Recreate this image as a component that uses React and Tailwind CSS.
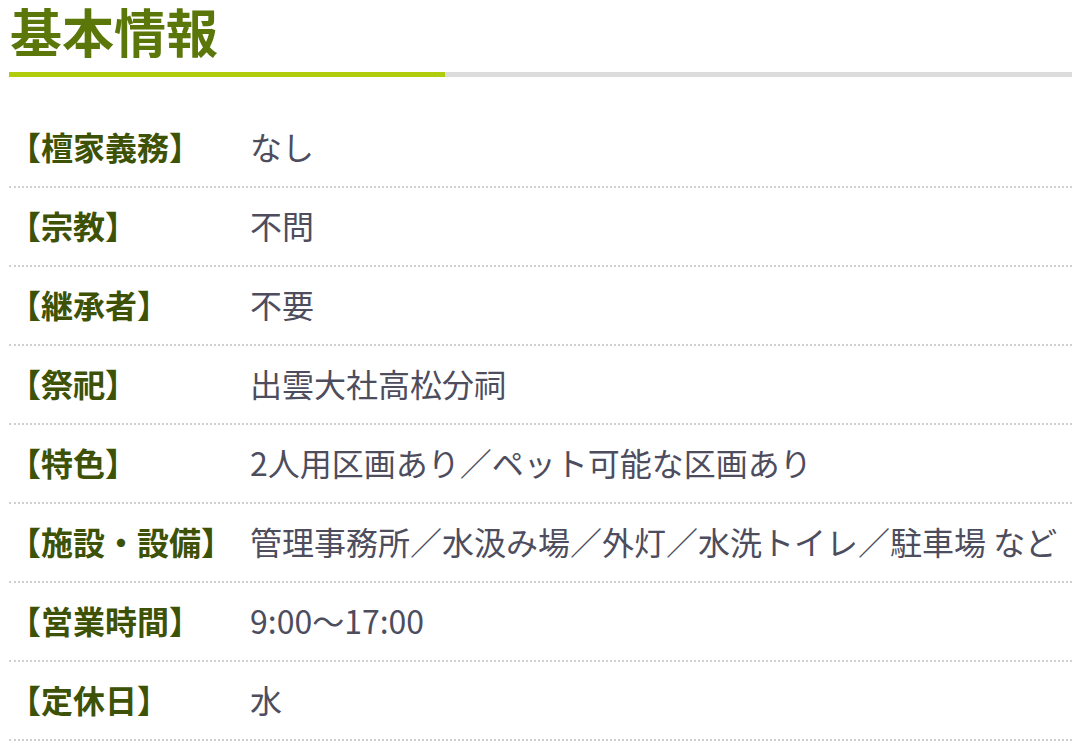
import React from 'react';

const rows = [
  ['【檀家義務】', 'なし'],
  ['【宗教】', '不問'],
  ['【継承者】', '不要'],
  ['【祭祀】', '出雲大社高松分祠'],
  ['【特色】', '2人用区画あり／ペット可能な区画あり'],
  ['【施設・設備】', '管理事務所／水汲み場／外灯／水洗トイレ／駐車場 など'],
  ['【営業時間】', '9:00〜17:00'],
  ['【定休日】', '水'],
];

export default function App() {
  return (
    <div className="bg-white min-h-[754px] pl-[9px]" style={{ fontFamily: '"Noto Sans CJK JP", "Noto Sans", sans-serif' }}>
      <h2 className="pl-[1px] text-[52px] leading-[62px] font-bold text-[#5b7609]">基本情報</h2>

      {/* underline: green accent + gray rest */}
      <div className="flex h-[5px] mt-[10px]">
        <div className="w-[436px] bg-[#b1cc0c]" />
        <div className="flex-1 bg-[#dcdcdc]" />
      </div>

      <dl className="mt-[32px]">
        {rows.map(([label, value]) => (
          <div key={label} className="flex items-center h-[79px] pb-[4px] border-b-2 border-dotted border-[#cfcfcf]">
            <dt className="w-[241px] shrink-0 text-[32px] font-bold text-[#3d5206]">{label}</dt>
            <dd className="text-[32px] text-[#4d4d5e] whitespace-nowrap">{value}</dd>
          </div>
        ))}
      </dl>
    </div>
  );
}
